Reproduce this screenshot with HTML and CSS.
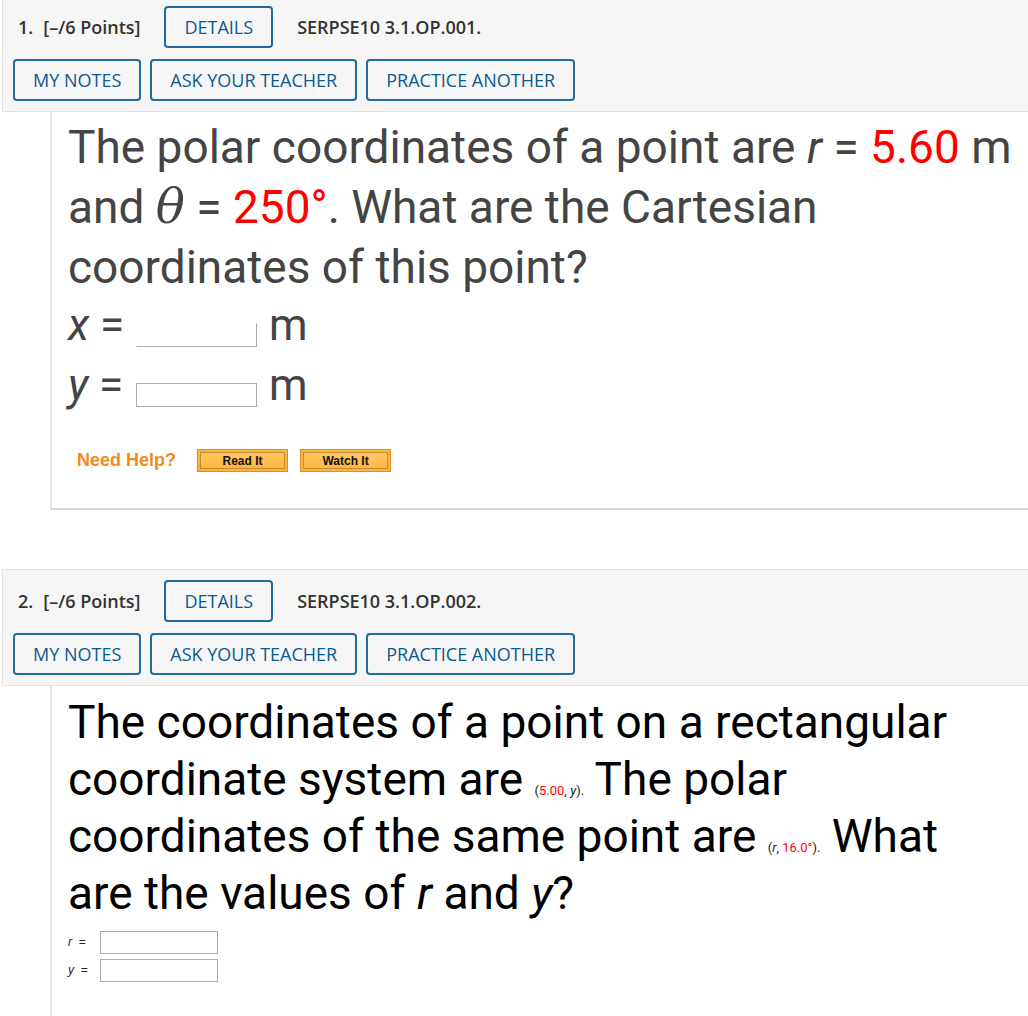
FILE: index.html
```html
<!DOCTYPE html>
<html lang="en">
<head>
    <title>SERPSE10 Chapter 3</title>
    <meta name='viewport' content='width=device-width, initial-scale=1'>
    <link rel="stylesheet" href="styles.css">
</head>
<body>
<div class="question first">
    <div class="q-head">
        <div class="q-row">
            <span class="q-num">1.</span>
            <span class="q-points">[&ndash;/6 Points]</span>
            <button class="btn">DETAILS</button>
            <span class="q-code">SERPSE10 3.1.OP.001.</span>
        </div>
        <div class="q-row tight">
            <button class="btn">MY NOTES</button>
            <button class="btn">ASK YOUR TEACHER</button>
            <button class="btn">PRACTICE ANOTHER</button>
        </div>
    </div>
    <div class="q-body closed">
        <p class="prompt grey">The polar coordinates of a point are <i>r</i> = <span class="given">5.60</span> m and <i class="theta">&theta;</i> = <span class="given">250&deg;</span>. What are the Cartesian coordinates of this point?</p>
        <div class="answer-big">
            <div class="answer-row">
                <label><i>x</i> =</label>
                <input type="text" class="blank faint">
                <span class="unit">m</span>
            </div>
            <div class="answer-row">
                <label><i>y</i> =</label>
                <input type="text" class="blank">
                <span class="unit">m</span>
            </div>
        </div>
        <div class="help">
            <span class="help-label">Need Help?</span>
            <button class="help-btn">Read It</button>
            <button class="help-btn">Watch It</button>
        </div>
    </div>
</div>

<div class="question">
    <div class="q-head">
        <div class="q-row">
            <span class="q-num">2.</span>
            <span class="q-points">[&ndash;/6 Points]</span>
            <button class="btn">DETAILS</button>
            <span class="q-code">SERPSE10 3.1.OP.002.</span>
        </div>
        <div class="q-row tight">
            <button class="btn">MY NOTES</button>
            <button class="btn">ASK YOUR TEACHER</button>
            <button class="btn">PRACTICE ANOTHER</button>
        </div>
    </div>
    <div class="q-body">
        <p class="prompt black">The coordinates of a point on a rectangular coordinate system are <span class="mini">(<span class="given">5.00</span>, <i>y</i>).</span> The polar coordinates of the same point are <span class="mini">(<i>r</i>, <span class="given">16.0&deg;</span>).</span> What are the values of <i>r</i> and <i>y</i>?</p>
        <div class="answer-small">
            <div class="answer-row">
                <label><i>r</i> &nbsp;=</label>
                <input type="text" class="blank">
            </div>
            <div class="answer-row">
                <label><i>y</i> &nbsp;=</label>
                <input type="text" class="blank">
            </div>
        </div>
    </div>
</div>
</body>
</html>
```

FILE: styles.css
```css
:root {
    --panel: #f6f6f6;
    --panel-line: #e2e2e2;
    --blue: #0a5a8e;
    --blue-line: #1f6b9e;
    --ink: #444;
    --red: #ff0000;
    --orange: #f28a1e;
}

html {
    box-sizing: border-box;
}

*, *:before, *:after {
    box-sizing: inherit;
}

body {
    margin: 0;
    background: #fff;
    font-family: "Open Sans", "Liberation Sans", sans-serif;
    overflow: hidden;
}

.question {
    margin-bottom: 59px;
}

.question.first {
    margin-top: -5px;
}

.q-head {
    margin-left: 2px;
    background: var(--panel);
    border: 1px solid var(--panel-line);
    border-right: none;
    padding: 10px 0 10px 10px;
    display: flex;
    flex-direction: column;
    gap: 11px;
}

.q-row {
    display: flex;
    align-items: center;
    gap: 24px;
}

.q-row.tight {
    gap: 9px;
}

.q-num,
.q-points,
.q-code {
    font-weight: 600;
    font-size: 18px;
    color: #333;
}

.q-num {
    margin-left: 5px;
    margin-right: -14px;
}

.btn {
    height: 42px;
    padding: 0 18px;
    background: transparent;
    border: 2px solid var(--blue-line);
    border-radius: 4px;
    color: var(--blue);
    font-family: "Open Sans", "Liberation Sans", sans-serif;
    font-size: 18px;
}

.q-body {
    margin-left: 50px;
    border-left: 2px solid #e4e4e4;
    padding: 0 0 0 16px;
}

.q-body.closed {
    border-bottom: 2px solid #d4d4d4;
    padding-bottom: 36px;
}

.prompt {
    margin: 0;
    font-family: Roboto, "Liberation Sans", sans-serif;
    font-size: 46px;
}

.prompt.grey {
    color: var(--ink);
    line-height: 60px;
    padding-top: 5px;
}

.prompt.black {
    color: #000;
    line-height: 57px;
    padding-top: 8px;
    max-width: 930px;
}

.given {
    color: var(--red);
}

.theta {
    font-family: "DejaVu Serif", "Liberation Serif", serif;
    font-size: 1.05em;
    line-height: 1;
}

.mini {
    font-size: 13px;
    line-height: 1;
    color: #222;
}

.answer-big .answer-row {
    display: flex;
    align-items: center;
    height: 60px;
    font-family: Roboto, "Liberation Sans", sans-serif;
    color: var(--ink);
    font-size: 44px;
}

.answer-big label {
    width: 68px;
    margin-top: -4px;
}

.answer-big .unit {
    margin-top: -4px;
}

.answer-big .blank {
    width: 121px;
    height: 24px;
    margin-top: 16px;
    margin-right: 12px;
}

.blank {
    border: 1px solid #aaa;
    background: #fff;
    padding: 0;
}

.blank.faint {
    border-top-color: #fff;
    border-left-color: #fff;
}

.help {
    display: flex;
    align-items: center;
    gap: 12px;
    margin: 32px 0 0 9px;
}

.help-label {
    font-family: "Liberation Sans", Arial, sans-serif;
    font-weight: bold;
    font-size: 18px;
    color: var(--orange);
    margin-right: 9px;
}

.help-btn {
    width: 91px;
    height: 23px;
    padding: 0;
    border: 1px solid #e58a2c;
    box-shadow: inset 0 0 0 2px #ffb440, inset 0 0 0 3px #c88a2a;
    background: linear-gradient(#ffcd6a, #ffb13b);
    font-family: "Liberation Sans", Arial, sans-serif;
    font-weight: bold;
    font-size: 12px;
    color: #111;
}

.answer-small {
    margin-top: 6px;
    padding-bottom: 60px;
}

.answer-small .answer-row {
    display: flex;
    align-items: center;
    height: 28px;
    font-family: "Liberation Sans", Arial, sans-serif;
    font-size: 12px;
    color: #222;
}

.answer-small label {
    width: 32px;
}

.answer-small .blank {
    width: 118px;
    height: 23px;
}
```
